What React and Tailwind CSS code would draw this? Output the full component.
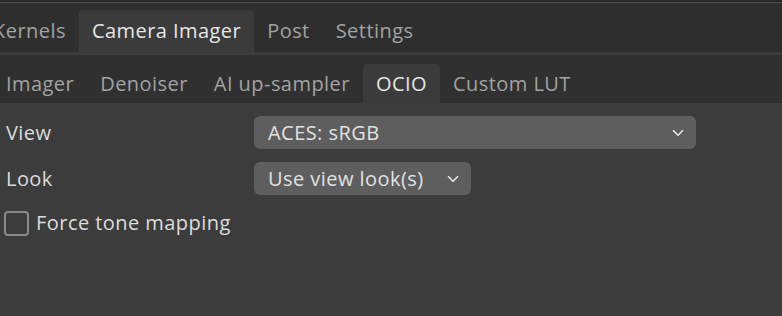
import { ChevronDown } from 'lucide-react'

const font = { fontFamily: '"Open Sans", "Liberation Sans", sans-serif' }

function Tab({ label, active }) {
  return (
    <div className={`flex items-center px-[13px] h-full rounded-t-[4px] ${active ? 'bg-[#3b3b3b] text-[#e6e6e6]' : 'text-[#a2a2a2]'}`}>
      {label}
    </div>
  )
}

function Select({ value, wide }) {
  return (
    <div className={`flex items-center justify-between h-[33px] rounded-[6px] bg-[#5e5e5e] pl-[14px] pr-[9px] text-[#e2e2e2] ${wide ? 'w-[442px]' : 'w-[217px]'}`}>
      <span>{value}</span>
      <ChevronDown size={18} strokeWidth={2.2} className="text-[#e8e8e8]" />
    </div>
  )
}

export default function App() {
  return (
    <div className="w-[782px] h-[316px] overflow-hidden bg-[#3c3c3c] text-[20px] tracking-[0.45px] flex flex-col" style={font}>
      <div className="h-[3px] bg-[#272727] border-b border-[#4a4a4a] shrink-0" />
      <div className="h-[49px] bg-[#2e2e2e] flex items-end shrink-0">
        <div className="flex h-[42px] ml-[-20px]">
          <Tab label="Kernels" />
          <Tab label="Camera Imager" active />
          <Tab label="Post" />
          <Tab label="Settings" />
        </div>
      </div>
      <div className="h-[3px] bg-[#3b3b3b] shrink-0" />
      <div className="h-[48px] bg-[#303030] flex items-end shrink-0">
        <div className="flex h-[39px] ml-[-7px]">
          <Tab label="Imager" />
          <Tab label="Denoiser" />
          <Tab label="AI up-sampler" />
          <Tab label="OCIO" active />
          <Tab label="Custom LUT" />
        </div>
      </div>
      <div className="flex flex-col gap-[13px] pt-[13px] px-[6px] text-[#dcdcdc]">
        <div className="flex items-center">
          <span className="w-[248px]">View</span>
          <Select value="ACES: sRGB" wide />
        </div>
        <div className="flex items-center">
          <span className="w-[248px]">Look</span>
          <Select value="Use view look(s)" />
        </div>
        <label className="flex items-center gap-[7px] -ml-[2px]">
          <span className="w-[25px] h-[25px] rounded-[4px] border-2 border-[#8a8a8a]" />
          <span>Force tone mapping</span>
        </label>
      </div>
    </div>
  )
}
